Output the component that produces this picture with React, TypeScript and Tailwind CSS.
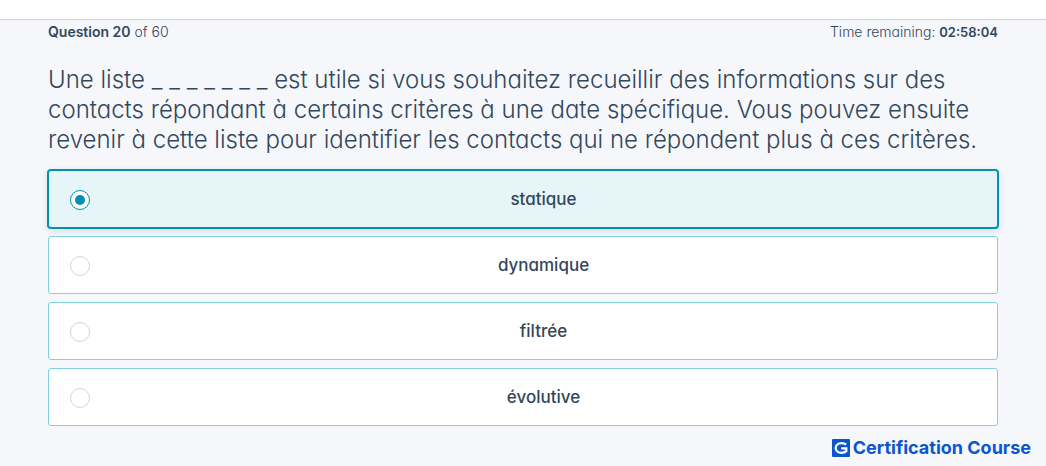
import { useState } from "react";

const answers = ["statique", "dynamique", "filtrée", "évolutive"];

function CourseLogo() {
  return (
    <svg viewBox="0 0 18 18" className="size-[18px] shrink-0" aria-hidden="true">
      <rect width="18" height="18" rx="1" fill="#0a56d0" />
      <path
        d="M14.200 5.700C13 4.700 11.300 4.200 9.500 4.200C6.100 4.200 3.700 6.200 3.700 9s2.400 4.800 5.800 4.800c1.900 0 3.600-.6 4.800-1.700V9.300H9.200"
        fill="none"
        stroke="#fff"
        strokeWidth="2.300"
      />
    </svg>
  );
}

export default function App() {
  const [selected, setSelected] = useState("statique");

  return (
    <div className="flex min-h-screen flex-col bg-[#f5f7fb] font-['Inter','Open_Sans',sans-serif] text-[#33475b]">
      <header className="h-5 border-b border-[#cbd6e2] bg-white" />
      <main className="px-12 [font-feature-settings:'cv11']">
        <div className="flex h-6 items-center justify-between text-sm font-light">
          <p>
            <strong className="font-semibold">Question 20</strong> of 60
          </p>
          <p>
            Time remaining: <strong className="text-[13px] font-semibold">02:58:04</strong>
          </p>
        </div>
        <form>
          <fieldset>
            <legend className="pt-[21px] pb-[15px] text-2xl leading-[30px] font-light">
              Une liste _ _ _ _ _ _ _ est utile si vous souhaitez recueillir des informations sur des
              contacts répondant à certains critères à une date spécifique. Vous pouvez ensuite
              revenir à cette liste pour identifier les contacts qui ne répondent plus à ces critères.
            </legend>
            <div className="flex flex-col gap-2">
              {answers.map((answer) => (
                <label
                  key={answer}
                  className="flex h-[58px] cursor-pointer items-center rounded-[3px] border border-[#7fd1de] bg-white pt-0.5 pl-[21px] has-checked:border-[#0091ae] has-checked:bg-[#e5f5f8] has-checked:shadow-[0_0_0_1px_#0091ae,0_2px_6px_1px_rgba(45,62,80,0.14)]"
                >
                  <input
                    type="radio"
                    name="answer"
                    value={answer}
                    checked={selected === answer}
                    onChange={() => setSelected(answer)}
                    className="flex size-5 shrink-0 appearance-none items-center justify-center rounded-full border border-[#cbd6e2] bg-white before:size-2.5 before:rounded-full checked:border-[#0091ae] checked:before:bg-[#0091ae]"
                  />
                  <span className="flex-1 text-center text-[17px] font-medium">{answer}</span>
                </label>
              ))}
            </div>
          </fieldset>
        </form>
      </main>
      <footer className="flex items-center justify-end gap-[3px] px-[15px] pt-[13px] text-[#0a56d0]">
        <CourseLogo />
        <span className="text-lg leading-[18px] font-bold">Certification Course</span>
      </footer>
    </div>
  );
}
